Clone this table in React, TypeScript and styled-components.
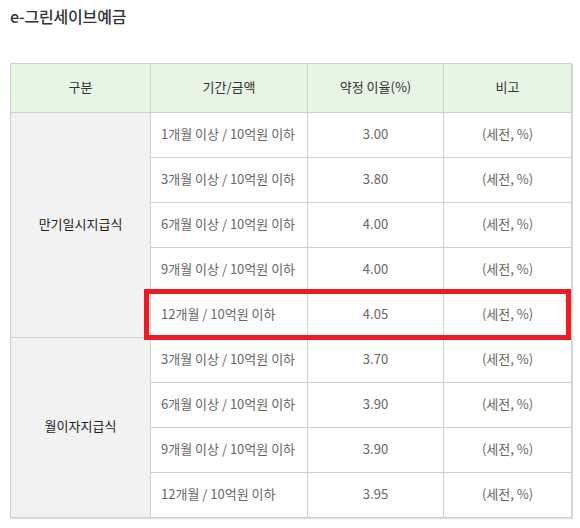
import React from 'react';
import styled, { createGlobalStyle } from 'styled-components';

const GlobalStyle = createGlobalStyle`
  body {
    margin: 0;
    background: #fff;
    font-family: "Noto Sans CJK KR", "Noto Sans", sans-serif;
  }
`;

const Page = styled('div')`
  width: 580px;
  height: 528px;
  padding: 0 9px 0 10px;
  box-sizing: border-box;
`;

const Title = styled('h2')`
  margin: 0;
  padding-top: 5px;
  height: 58px;
  font-size: 16px;
  font-weight: 500;
  line-height: 22px;
  color: #333;
  letter-spacing: -0.2px;
`;

const TableWrap = styled('div')`
  position: relative;
  width: 561px;
`;

const Table = styled('table')`
  width: 561px;
  border-collapse: collapse;
  table-layout: fixed;
  border: 1px solid #cfcfcf;
  box-shadow: 1px 1px 1px rgba(0, 0, 0, 0.12);
  font-size: 13px;
  line-height: 16px;
`;

const Th = styled('th')`
  height: 49px;
  padding: 0 0 2px;
  box-sizing: border-box;
  background: #e6f5e4;
  border: 1px solid #cfcfcf;
  font-weight: 400;
  color: #333;
  text-align: center;
`;

const Td = styled('td')<{ $align?: 'left' | 'center'; $group?: boolean }>`
  height: 45px;
  box-sizing: border-box;
  padding: 0 ${(p) => (p.$align === 'left' ? '10px' : '0')} 3px;
  border: 1px solid #cfcfcf;
  text-align: ${(p) => p.$align ?? 'center'};
  color: ${(p) => (p.$group ? '#222' : '#666')};
  background: ${(p) => (p.$group ? '#f2f2f2' : '#fff')};
`;

const Highlight = styled('div')`
  position: absolute;
  left: 134px;
  top: 226px;
  width: 427px;
  height: 51px;
  border: 5px solid #ec1c24;
  box-sizing: border-box;
  pointer-events: none;
`;

type Row = { period: string; rate: string };

const groups: { name: string; rows: Row[] }[] = [
  {
    name: '만기일시지급식',
    rows: [
      { period: '1개월 이상 / 10억원 이하', rate: '3.00' },
      { period: '3개월 이상 / 10억원 이하', rate: '3.80' },
      { period: '6개월 이상 / 10억원 이하', rate: '4.00' },
      { period: '9개월 이상 / 10억원 이하', rate: '4.00' },
      { period: '12개월 / 10억원 이하', rate: '4.05' },
    ],
  },
  {
    name: '월이자지급식',
    rows: [
      { period: '3개월 이상 / 10억원 이하', rate: '3.70' },
      { period: '6개월 이상 / 10억원 이하', rate: '3.90' },
      { period: '9개월 이상 / 10억원 이하', rate: '3.90' },
      { period: '12개월 / 10억원 이하', rate: '3.95' },
    ],
  },
];

const App: React.FC = () => {
  return (
    <Page>
      <GlobalStyle />
      <Title>e-그린세이브예금</Title>
      <TableWrap>
        <Table>
          <colgroup>
            <col style={{ width: 140 }} />
            <col style={{ width: 157 }} />
            <col style={{ width: 136 }} />
            <col style={{ width: 128 }} />
          </colgroup>
          <thead>
            <tr>
              <Th>구분</Th>
              <Th>기간/금액</Th>
              <Th>약정 이율(%)</Th>
              <Th>비고</Th>
            </tr>
          </thead>
          <tbody>
            {groups.map((g) =>
              g.rows.map((r, i) => (
                <tr key={g.name + i}>
                  {i === 0 && (
                    <Td $group rowSpan={g.rows.length}>
                      {g.name}
                    </Td>
                  )}
                  <Td $align="left">{r.period}</Td>
                  <Td>{r.rate}</Td>
                  <Td>(세전, %)</Td>
                </tr>
              ))
            )}
          </tbody>
        </Table>
        <Highlight />
      </TableWrap>
    </Page>
  );
};

export default App;
